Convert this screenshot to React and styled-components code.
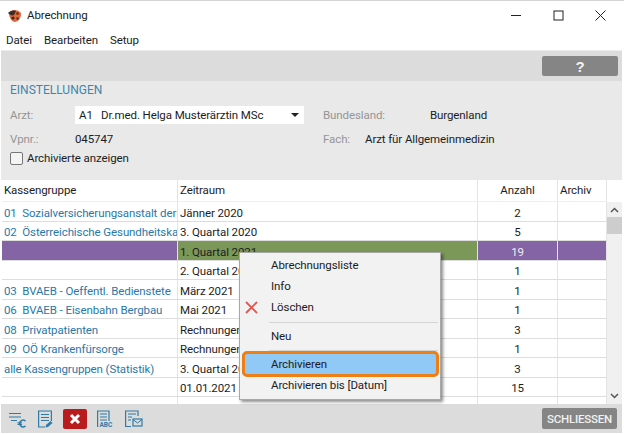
import styled, { createGlobalStyle } from 'styled-components';

const GlobalStyle = createGlobalStyle`
  html, body { margin: 0; padding: 0; background: #fff; }
  body { font-family: Roboto, "Liberation Sans", sans-serif; font-size: 11.5px; letter-spacing: -0.1px; color: #1c1c24; }
`;

const Win = styled.div`
  width: 624px;
  height: 434px;
  box-sizing: border-box;
  padding: 1px 2px 1px 1px;
  display: flex;
  flex-direction: column;
  overflow: hidden;
  border-top: 1px solid #d4d4d4;
  position: relative;
`;

const TitleBar = styled.div`
  height: 27px;
  display: flex;
  align-items: center;
  padding: 0 1px 1px 6px;
  box-sizing: border-box;
  flex: none;
`;

const AppTitle = styled.span`
  margin-left: 5px;
  flex: 1;
`;

const WinBtn = styled.div`
  width: 42px;
  height: 26px;
  display: flex;
  align-items: center;
  justify-content: center;
`;

const Menu = styled.div`
  height: 20px;
  display: flex;
  gap: 12px;
  align-items: center;
  padding: 2px 0 0 5px;
  box-sizing: border-box;
  flex: none;
`;

const ToolStrip = styled.div`
  margin-top: 1px;
  height: 31px;
  background: #dcdcdc;
  flex: none;
  display: flex;
  justify-content: flex-end;
  align-items: center;
  padding-right: 4px;
  border-top: 1px solid #ececec;
  box-sizing: border-box;
`;

const HelpButton = styled.div`
  width: 76px;
  height: 20px;
  background: #858585;
  border-radius: 2px;
  color: #f2f2f2;
  font: bold 15px "Liberation Sans", sans-serif;
  display: flex;
  align-items: center;
  justify-content: center;
`;

const Settings = styled.div`
  height: 99px;
  flex: none;
  background: #e9e9e9;
  box-sizing: border-box;
  padding: 1px 8px 0 9px;
  display: flex;
  flex-direction: column;
`;

const SectionTitle = styled.div`
  color: #3d86ad;
  font-size: 12px;
  letter-spacing: 0;
  height: 17px;
  line-height: 17px;
`;

const FormRow = styled.div`
  display: flex;
  align-items: center;
  height: ${({ $h }) => $h}px;
  margin-top: ${({ $mt }) => $mt || 0}px;
`;

const FieldLabel = styled.span`
  color: #959595;
  width: ${({ $w }) => $w}px;
  margin-left: ${({ $ml }) => $ml || 0}px;
  flex: none;
`;

const FieldValue = styled.span`
  width: ${({ $w }) => ($w ? `${$w}px` : 'auto')};
  flex: none;
`;

const Select = styled.div`
  width: 229px;
  height: 18px;
  background: #fff;
  display: flex;
  align-items: center;
  justify-content: space-between;
  padding: 0 4px;
  box-sizing: border-box;
  white-space: pre;
  flex: none;
`;

const Caret = styled.span`
  width: 0;
  height: 0;
  border-left: 4px solid transparent;
  border-right: 4px solid transparent;
  border-top: 4px solid #222;
  margin-right: 1px;
`;

const CheckBox = styled.span`
  width: 11px;
  height: 11px;
  border: 1px solid #777;
  border-radius: 2px;
  background: #f4f4f4;
  margin-right: 4px;
  flex: none;
`;

const TableArea = styled.div`
  flex: 1;
  position: relative;
  min-height: 0;
  display: flex;
  background: #fff;
  padding-left: 1px;
`;

const Rows = styled.div`
  width: 605px;
  flex: none;
  overflow: hidden;
`;

const Row = styled.div`
  display: grid;
  grid-template-columns: 176px 300px 80px 49px;
  height: ${({ $head }) => ($head ? 22 : 19.5)}px;
  box-sizing: border-box;
  border-bottom: ${({ $head }) => ($head ? '1px solid #eeeeee' : '1.5px solid #dddddd')};
`;

const Cell = styled.div`
  padding: ${({ $head }) => ($head ? '0 2px' : '2.5px 2px 0')};
  line-height: ${({ $head }) => ($head ? 21 : 17)}px;
  white-space: pre;
  overflow: hidden;
  box-sizing: border-box;
  border-right: 1px solid #e4e4e4;
  text-align: ${({ $center }) => ($center ? 'center' : 'left')};
  background: ${({ $bg }) => $bg || 'transparent'};
  color: ${({ $color }) => $color || 'inherit'};
`;

const ScrollBar = styled.div`
  flex: 1;
  background: #f0f0f0;
  margin-top: 22px;
  position: relative;
  display: flex;
  flex-direction: column;
  align-items: center;
  justify-content: space-between;
`;

const ScrollArrow = styled.div`
  height: 16px;
  display: flex;
  align-items: center;
`;

const ScrollThumb = styled.div`
  position: absolute;
  top: 15px;
  left: 0;
  right: 0;
  height: 17px;
  background: #cdcdcd;
`;

const ContextMenu = styled.div`
  position: absolute;
  left: 238px;
  top: 72px;
  width: 202px;
  height: 148px;
  background: #f2f2f2;
  border: 1px solid #a8a8a8;
  box-sizing: border-box;
  box-shadow: 2px 2px 3px rgba(0, 0, 0, 0.45);
  padding-top: 2px;
  display: flex;
  flex-direction: column;
  z-index: 2;
`;

const MenuItem = styled.div`
  height: ${({ $h }) => $h || 21}px;
  line-height: ${({ $h }) => $h || 21}px;
  padding-left: ${({ $active }) => ($active ? 29 : 31)}px;
  position: relative;
  flex: none;
  margin: ${({ $active }) => ($active ? '3px 2px 1px' : '0')};
  background: ${({ $active }) => ($active ? '#90c8f6' : 'transparent')};
`;

const MenuIcon = styled.span`
  position: absolute;
  left: 5px;
  top: 4px;
  display: flex;
`;

const Separator = styled.div`
  height: 1px;
  margin: ${({ $first }) => ($first ? '4px 2px 3px 29px' : '3px 2px 0 29px')};
  background: #d4d4d4;
  flex: none;
`;

const Highlight = styled.div`
  position: absolute;
  left: 241px;
  top: 171px;
  width: 197px;
  height: 26px;
  box-sizing: border-box;
  border: 3px solid #f07f13;
  border-radius: 5px;
  z-index: 3;
`;

const BottomBar = styled.div`
  height: 29px;
  flex: none;
  background: #dcdcdc;
  display: flex;
  align-items: center;
  padding: 0 5px 0 6px;
  gap: 8px;
`;

const ToolIcon = styled.div`
  width: ${({ $w }) => $w || 20}px;
  height: 20px;
  display: flex;
  align-items: center;
  justify-content: center;
  flex: none;
  border-radius: 2px;
  background: ${({ $bg }) => $bg || 'transparent'};
`;

const CloseButton = styled.div`
  margin-left: auto;
  width: 75px;
  height: 21px;
  background: #858585;
  color: #f0f0f0;
  font-size: 11.5px;
  font-weight: 500;
  letter-spacing: -0.2px;
  border-radius: 2px;
  display: flex;
  align-items: center;
  justify-content: center;
`;

const BLUE = '#2f7aa6';
const PURPLE = '#8464a4';
const GREEN = '#7b9858';
const LINK = '#2a78a8';

const rows = [
  { a: '01  Sozialversicherungsanstalt der', b: 'Jänner 2020', c: '2' },
  { a: '02  Österreichische Gesundheitska', b: '3. Quartal 2020', c: '5' },
  { a: '', b: '1. Quartal 2021', c: '19', selected: true },
  { a: '', b: '2. Quartal 2021', c: '1' },
  { a: '03  BVAEB - Oeffentl. Bedienstete', b: 'März 2021', c: '1' },
  { a: '06  BVAEB - Eisenbahn Bergbau', b: 'Mai 2021', c: '1' },
  { a: '08  Privatpatienten', b: 'Rechnungen', c: '3' },
  { a: '09  OÖ Krankenfürsorge', b: 'Rechnungen', c: '1' },
  { a: 'alle Kassengruppen (Statistik)', b: '3. Quartal 2021', c: '3' },
  { a: '', b: '01.01.2021', c: '15' },
  { a: '', b: '', c: '' },
];

function Ladybug() {
  return (
    <svg width="15" height="15" viewBox="0 0 15 15">
      <path d="M2 5 C4 1 11 1 14 5 C14.5 10 11 14 8 14 C5 14 2 10 2 5 Z" fill="#e0683a" />
      <path d="M1 5 C3 3 6 2 9 3 L7 7 C5 8 3 7 1 5 Z" fill="#3c2a26" />
      <circle cx="10.5" cy="5.5" r="1.3" fill="#5c2c1e" />
      <circle cx="6" cy="10" r="1.6" fill="#3a2622" />
      <circle cx="10.5" cy="10.5" r="1.2" fill="#5c2c1e" />
    </svg>
  );
}

function ListEuro() {
  return (
    <svg width="18" height="18" viewBox="0 0 18 18" fill="none" stroke={BLUE} strokeWidth="1">
      <path d="M1 3.5h12M1 7h12M3 10.5h6" />
      <path d="M17 10.6a3.4 3.4 0 1 0 0 5.8" strokeWidth="1.6" strokeLinecap="round" />
      <path d="M9.5 12.8h4.5M9.5 14.4h4.5" strokeWidth="1.1" />
    </svg>
  );
}

function DocPen() {
  return (
    <svg width="16" height="18" viewBox="0 0 16 18" fill="none" stroke={BLUE} strokeWidth="1.2">
      <path d="M8 17H1.6V1h12.8v10" />
      <path d="M4 4.5h8M4 7.5h8M4 10.5h8" strokeWidth="1" />
      <path d="M8.5 17.5l.5-2.5 4.5-4 2 2-4.5 4z" fill={BLUE} stroke="none" />
    </svg>
  );
}

function DocAbc() {
  return (
    <svg width="18" height="18" viewBox="0 0 18 18" fill="none" stroke={BLUE} strokeWidth="1.2">
      <path d="M1.6 17V1H13v10" />
      <path d="M4 4h7M4 7h7M4 10h7" strokeWidth="1" />
      <text x="3.5" y="17" fontFamily="Roboto, sans-serif" fontSize="6.5" fontWeight="700" letterSpacing="0" fill={BLUE} stroke="none">ABC</text>
    </svg>
  );
}

function DocMail() {
  return (
    <svg width="19" height="18" viewBox="0 0 19 18" fill="none" stroke={BLUE} strokeWidth="1.2">
      <path d="M7 16.5H1.6V1H14v5" />
      <path d="M4 4h8M4 7h4M4 10h3" strokeWidth="1" />
      <rect x="9" y="9" width="9" height="7" />
      <path d="M9 9.5l4.5 3.5L18 9.5" strokeWidth="1" />
    </svg>
  );
}

export default function App() {
  return (
    <>
      <GlobalStyle />
      <Win>
        <TitleBar>
          <Ladybug />
          <AppTitle>Abrechnung</AppTitle>
          <WinBtn>
            <svg width="11" height="11" viewBox="0 0 11 11"><path d="M0 5.5h10" stroke="#222" strokeWidth="1" /></svg>
          </WinBtn>
          <WinBtn>
            <svg width="11" height="11" viewBox="0 0 11 11"><rect x="1" y="1" width="9" height="9" fill="none" stroke="#222" /></svg>
          </WinBtn>
          <WinBtn>
            <svg width="11" height="11" viewBox="0 0 11 11"><path d="M.5.5l10 10M10.5.5l-10 10" stroke="#222" /></svg>
          </WinBtn>
        </TitleBar>
        <Menu>
          <span>Datei</span>
          <span>Bearbeiten</span>
          <span>Setup</span>
        </Menu>
        <ToolStrip>
          <HelpButton>?</HelpButton>
        </ToolStrip>
        <Settings>
          <SectionTitle>EINSTELLUNGEN</SectionTitle>
          <FormRow $h={18} $mt={7}>
            <FieldLabel $w={65}>Arzt:</FieldLabel>
            <Select>
              <span>A1   Dr.med. Helga Musterärztin MSc</span>
              <Caret />
            </Select>
            <FieldLabel $w={107} $ml={19}>Bundesland:</FieldLabel>
            <span>Burgenland</span>
          </FormRow>
          <FormRow $h={18} $mt={6}>
            <FieldLabel $w={65}>Vpnr.:</FieldLabel>
            <FieldValue $w={248}>045747</FieldValue>
            <FieldLabel $w={42}>Fach:</FieldLabel>
            <FieldValue>Arzt für Allgemeinmedizin</FieldValue>
          </FormRow>
          <FormRow $h={18} $mt={1}>
            <CheckBox />
            <span>Archivierte anzeigen</span>
          </FormRow>
        </Settings>
        <TableArea>
          <Rows>
            <Row $head>
              <Cell $head>Kassengruppe</Cell>
              <Cell $head>Zeitraum</Cell>
              <Cell $head $center>Anzahl</Cell>
              <Cell $head>Archiv</Cell>
            </Row>
            {rows.map((r, i) => (
              <Row key={i}>
                <Cell $bg={r.selected ? PURPLE : undefined} $color={LINK}>{r.a}</Cell>
                <Cell $bg={r.selected ? GREEN : undefined}>{r.b}</Cell>
                <Cell $center $bg={r.selected ? PURPLE : undefined} $color={r.selected ? '#eee' : undefined}>{r.c}</Cell>
                <Cell $bg={r.selected ? PURPLE : undefined} />
              </Row>
            ))}
          </Rows>
          <ScrollBar>
            <ScrollArrow>
              <svg width="9" height="6" viewBox="0 0 9 6"><path d="M1 5l3.5-3.5L8 5" fill="none" stroke="#555" strokeWidth="1.5" /></svg>
            </ScrollArrow>
            <ScrollThumb />
            <ScrollArrow>
              <svg width="9" height="6" viewBox="0 0 9 6"><path d="M1 1l3.5 3.5L8 1" fill="none" stroke="#555" strokeWidth="1.5" /></svg>
            </ScrollArrow>
          </ScrollBar>
          <ContextMenu>
            <MenuItem>Abrechnungsliste</MenuItem>
            <MenuItem>Info</MenuItem>
            <MenuItem>
              <MenuIcon>
                <svg width="13" height="13" viewBox="0 0 13 13"><path d="M1 1l11 11M12 1L1 12" stroke="#e9534a" strokeWidth="1.8" /></svg>
              </MenuIcon>
              Löschen
            </MenuItem>
            <Separator $first />
            <MenuItem>Neu</MenuItem>
            <Separator />
            <MenuItem $active $h={20}>Archivieren</MenuItem>
            <MenuItem>Archivieren bis [Datum]</MenuItem>
          </ContextMenu>
          <Highlight />
        </TableArea>
        <BottomBar>
          <ToolIcon><ListEuro /></ToolIcon>
          <ToolIcon><DocPen /></ToolIcon>
          <ToolIcon $w={24} $bg="#b81c1c">
            <svg width="12" height="12" viewBox="0 0 12 12"><path d="M2 2l8 8M10 2l-8 8" stroke="#fff" strokeWidth="3" /></svg>
          </ToolIcon>
          <ToolIcon><DocAbc /></ToolIcon>
          <ToolIcon><DocMail /></ToolIcon>
          <CloseButton>SCHLIESSEN</CloseButton>
        </BottomBar>
      </Win>
    </>
  );
}
